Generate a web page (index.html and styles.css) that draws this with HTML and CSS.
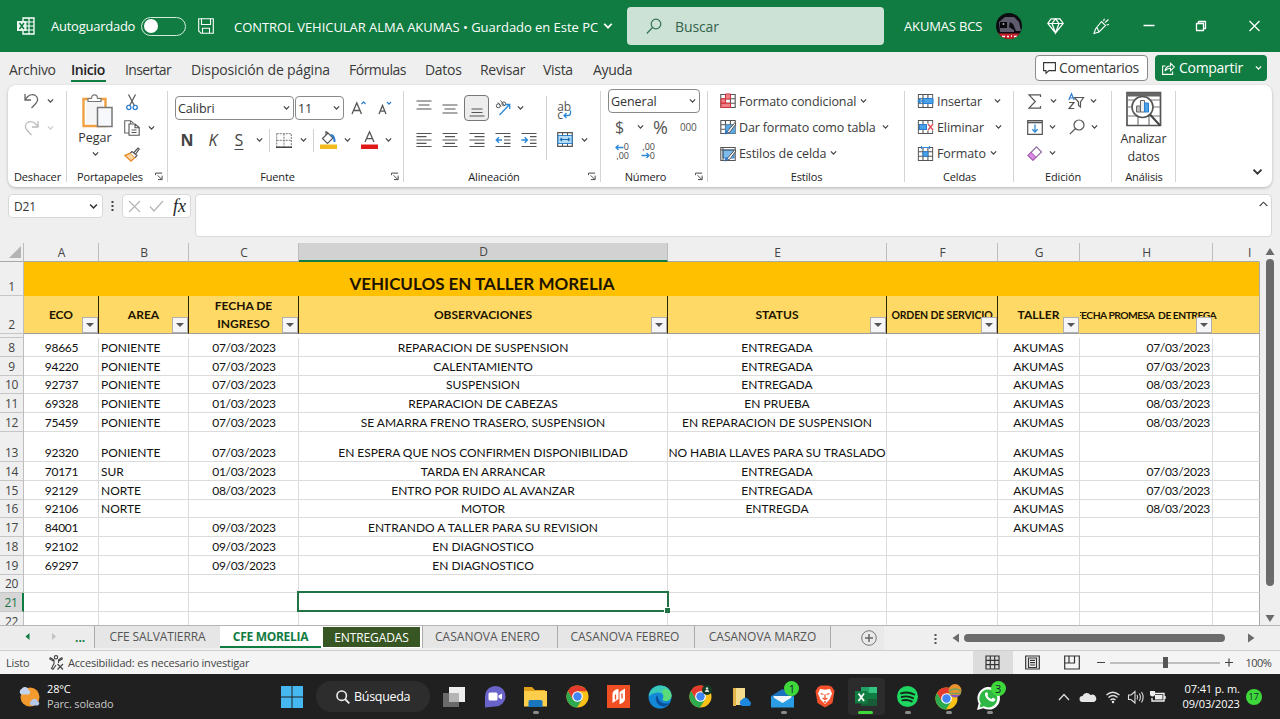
FILE: index.html
```html
<!DOCTYPE html>
<html lang="es">
<head>
<meta charset="utf-8">
<title>CONTROL VEHICULAR ALMA AKUMAS</title>
<link rel="stylesheet" href="styles.css">
</head>
<body>
<svg class="defs" width="0" height="0">
  <symbol id="chev" viewBox="0 0 8 6"><path d="M1 1.2 4 4.3 7 1.2" fill="none" stroke="currentColor" stroke-width="1.4"/></symbol>
  <symbol id="launch" viewBox="0 0 9 9"><path d="M.5 3V.7H8M3 3.2 7.5 7.7M8 3.5V8H3.3" fill="none" stroke="#444" stroke-width="1.1"/></symbol>
  <symbol id="gridcell" viewBox="0 0 16 16"><path d="M.8 1.5h14.4v13H.8zM.8 5.8h14.4M.8 10.2h14.4M5.5 1.5v13M10.4 1.5v13" fill="#fff" stroke="#555" stroke-width="1.1"/></symbol>
  <symbol id="chrome" viewBox="0 0 24 24"><circle cx="12" cy="12" r="11.5" fill="#fbc116"/><path d="M2 6.300A11.500 11.500 0 0 1 22 6.500H12L7 15Z" fill="#e33b2e"/><path d="M2 6.300A11.500 11.500 0 0 0 11.500 23.500L17 14.800 7.200 15Z" fill="#2da94f"/><circle cx="12" cy="12" r="5.600" fill="#fff"/><circle cx="12" cy="12" r="4.400" fill="#4285f4"/></symbol>
</svg>

<header class="titlebar">
  <svg class="xl" width="18" height="18" viewBox="0 0 18 18"><path d="M6 1h11v16H6z" fill="none" stroke="#fff" stroke-width="1.3"/><path d="M6 5h11M6 9h11M6 13h11M12 1v16" stroke="#fff" stroke-width="1.2"/><path d="M0 4h9.500v10H0z" fill="#e9f5ee"/><path d="M2.500 6 7 12M7 6l-4.500 6" stroke="#107c41" stroke-width="1.5"/></svg>
  <span class="autosave">Autoguardado</span>
  <span class="toggle"><i></i></span>
  <svg class="save" width="16" height="16" viewBox="0 0 16 16"><path d="M.7.7h14.600v14.600H3L.7 13zM3.500.7v5.800h9V.7M4.500 15.300v-5h7v5" fill="none" stroke="#fff" stroke-width="1.1"/></svg>
  <span class="doc">CONTROL VEHICULAR ALMA AKUMAS • Guardado en Este PC</span>
  <svg class="docchev" width="10" height="8" viewBox="0 0 8 6"><use href="#chev"/></svg>
  <div class="search"><svg width="16" height="17" viewBox="0 0 16 17"><circle cx="10" cy="6" r="4.800" fill="none" stroke="#33734f" stroke-width="1.200"/><path d="M6.500 9.500.8 15.500" stroke="#33734f" stroke-width="1.200"/></svg><span>Buscar</span></div>
  <span class="user">AKUMAS BCS</span>
  <svg class="avatar" width="26" height="26" viewBox="0 0 26 26"><clipPath id="av"><circle cx="13" cy="13" r="13"/></clipPath><g clip-path="url(#av)"><path fill="#0d0c12" d="M0 0h26v26H0z"/><path d="M3 9 9 4l9 0 5 5 2 9h-5l-3-7-3-2-1 5 5 3v2H4z" fill="#5d5b6c"/><path d="M4 9h7v6H4z" fill="#08080c"/><circle cx="7.500" cy="11" r="1" fill="#aaa"/><path fill="#c5202d" d="M0 20.500h26V26H0z"/><path d="M6 23.500h3m2 0h2m2-.5h1m2 .5h3" stroke="#fff" stroke-width="1.600"/></g></svg>
  <svg class="gem" width="17" height="16" viewBox="0 0 17 16"><path d="M4 .8h9L16.200 5.500 8.500 15 .8 5.500zM.8 5.500h15.400M8.500 15 5 5.500 8.500.8 12 5.500z" fill="none" stroke="#fff" stroke-width="1.200"/></svg>
  <svg class="pen" width="17" height="17" viewBox="0 0 17 17"><path d="M1 15.500 2.500 11 8.500 3.500l4 4L6 14zM4 9.500l2 4.500M1 15.500 6 14M10.500 3 11.500.8M12 4.500 15.500 1.500M13.500 7l2.500-.5" fill="none" stroke="#fff" stroke-width="1.100"/></svg>
  <svg class="winctl" width="118" height="14" viewBox="0 0 118 14"><path d="M.5 6.500h11M106.500 2l10 10M116.500 2l-10 10" stroke="#fff" stroke-width="1.300"/><path d="M53.500 4.500h7v7h-7zM55.500 4.500V2.500h7v7h-2" fill="none" stroke="#fff" stroke-width="1.300" stroke-linejoin="round"/></svg>
</header>

<nav class="tabs">
  <span class="t1">Archivo</span><span class="t2 on">Inicio</span><span class="t3">Insertar</span><span class="t4">Disposición de página</span><span class="t5">Fórmulas</span><span class="t6">Datos</span><span class="t7">Revisar</span><span class="t8">Vista</span><span class="t9">Ayuda</span>
  <div class="tabbtns">
    <span class="btn comments"><svg width="13" height="12" viewBox="0 0 13 12"><path d="M.6.600h11.800v8H6L3 11.200V8.600H.6z" fill="none" stroke="#333" stroke-width="1.100"/></svg>Comentarios</span>
    <span class="btn share"><svg width="13" height="13" viewBox="0 0 13 13"><path d="M3.500 4H.6v8.400h10V9.500M3 9c.5-3.500 2.500-5 5.500-5V1.200L12.400 5 8.500 8.800V6.200C6 6 4.500 7 3 9z" fill="none" stroke="#fff" stroke-width="1.100"/></svg>Compartir<svg class="sc" width="7" height="6"><use href="#chev"/></svg></span>
  </div>
</nav>

<section class="ribbon">
  <div class="grp g-undo">
    <div class="body">
      <div class="line h30 pl16"><svg width="15" height="16" viewBox="0 0 15 16"><path d="M1 1v6h6M1.300 6.500C4 2 8 .8 11 2.200c3 1.600 3.500 5.300 1 8L7.500 15" fill="none" stroke="#666" stroke-width="1.300"/></svg><svg class="cv ml8"><use href="#chev"/></svg></div>
      <div class="line h24 pl16 dim"><svg width="15" height="16" viewBox="0 0 15 16"><path d="M14 1v6H8M13.700 6.500C11 2 7 .8 4 2.200 1 3.800.5 7.500 3 10.200L7.500 15" fill="none" stroke="#bbb" stroke-width="1.300"/></svg><svg class="cv ml8"><use href="#chev"/></svg></div>
    </div>
    <div class="label">Deshacer</div>
  </div>

  <div class="grp g-clip">
    <div class="body cols">
      <div class="paste">
        <svg width="32" height="34" viewBox="0 0 32 34"><path d="M1.500 5h22v27h-22z" fill="#fff" stroke="#f0a040" stroke-width="2.400"/><path d="M4 7.500h17v22H4z" fill="#f5f5f5"/><path d="M6 7.500V4.500h3.500C9.500 2 11 .8 12.500.8S15.500 2 15.500 4.500H19v3z" fill="#fff" stroke="#777" stroke-width="1.200"/><path d="M15.500 13.500h14.500v19H15.500z" fill="#f7f8fb" stroke="#777" stroke-width="1.500"/></svg>
        <span>Pegar</span>
        <svg class="cv"><use href="#chev"/></svg>
      </div>
      <div class="stack">
        <div class="line h26"><svg class="ml2" width="12" height="17" viewBox="0 0 12 17"><path d="M2.500.5 8.300 11.500M9.500.5 3.700 11.500" stroke="#555" stroke-width="1.200"/><circle cx="2.800" cy="13.500" r="2.100" fill="none" stroke="#2b7cd3" stroke-width="1.300"/><circle cx="9.200" cy="13.500" r="2.100" fill="none" stroke="#2b7cd3" stroke-width="1.300"/></svg></div>
        <div class="line h26"><svg width="16" height="16" viewBox="0 0 16 16"><path d="M5 13H.7V.7h5.800l3 2.500M6.500.7v3" fill="none" stroke="#666" stroke-width="1.100"/><path d="M5 4h6l4.200 3.500v7.800H5zM11 4v3.800h4M7.500 10h5M7.500 12.500h5" fill="#fff" stroke="#555" stroke-width="1.100"/></svg><svg class="cv ml8"><use href="#chev"/></svg></div>
        <div class="line h26"><svg width="16" height="15" viewBox="0 0 16 15"><path d="M1 8.500 6.500 6l4.500 4.500-4 3.500z" fill="#fcd9a8" stroke="#ea8f2c" stroke-width="1.400"/><path d="M6.500 6 8 4.500l5 4L11 10.500M10 5.500l4-4.500 1.200 1-3.500 5" fill="#fff" stroke="#555" stroke-width="1.200"/></svg></div>
      </div>
    </div>
    <div class="label">Portapapeles</div><svg class="ln"><use href="#launch"/></svg>
  </div>

  <div class="grp g-font">
    <div class="body">
      <div class="line fr1">
        <span class="sel w118">Calibri<svg class="cv"><use href="#chev"/></svg></span>
        <span class="sel w49">11<svg class="cv"><use href="#chev"/></svg></span>
        <svg class="ml7" width="15" height="16" viewBox="0 0 15 16"><path d="M1 14 5.800 3 10.500 14M2.600 10.500H9" fill="none" stroke="#555" stroke-width="1.300"/><path d="M10.500 4 12.500 1.800 14.500 4" fill="none" stroke="#2b7cd3" stroke-width="1.200"/></svg>
        <svg class="ml11" width="15" height="16" viewBox="0 0 15 16"><path d="M2 14 5.500 5.500 9 14M3.300 11.200H8" fill="none" stroke="#555" stroke-width="1.300"/><path d="M10 2 12 4.200 14 2" fill="none" stroke="#2b7cd3" stroke-width="1.200"/></svg>
      </div>
      <div class="line fr2">
        <b class="gly n">N</b><i class="gly k">K</i><span class="gly s">S</span>
        <svg class="cv ml11"><use href="#chev"/></svg><i class="vs ml6"></i>
        <svg class="ml6" width="16" height="15" viewBox="0 0 16 15"><path d="M.7.700h14.600V14H.7zM8 .7V14M.7 7.300h14.600" fill="none" stroke="#777" stroke-width="1" stroke-dasharray="2 1"/><path d="M0 14.300h16" stroke="#444" stroke-width="1.400"/></svg>
        <svg class="cv ml8"><use href="#chev"/></svg><i class="vs ml6"></i>
        <svg class="ml6" width="17" height="18" viewBox="0 0 17 18"><path d="M2.500 7.500 8 2l5 5-5.500 5.500zM6 4V.8l2 1" fill="#fff" stroke="#555" stroke-width="1.200"/><path d="M10.500 4c3 0 4 2 4 7" fill="none" stroke="#2b7cd3" stroke-width="2"/><path fill="#f2bd1c" d="M0 13.500h17v4.500H0z"/></svg>
        <svg class="cv ml7"><use href="#chev"/></svg>
        <svg class="ml10" width="17" height="18" viewBox="0 0 17 18"><path d="M4 11 8.500.8 13 11M5.500 7.700h6" fill="none" stroke="#555" stroke-width="1.300"/><path fill="#e01919" d="M0 13.500h17v4.500H0z"/></svg>
        <svg class="cv ml7"><use href="#chev"/></svg>
      </div>
    </div>
    <div class="label">Fuente</div><svg class="ln"><use href="#launch"/></svg>
  </div>

  <div class="grp g-align">
    <div class="body cols">
      <div class="al">
        <div class="line ar1">
          <svg width="16" height="18" viewBox="0 0 16 18"><path d="M.5 2h15M2.500 6h11M.5 10h15" stroke="#555" stroke-width="1.200"/></svg>
          <svg width="16" height="18" viewBox="0 0 16 18"><path d="M.5 6h15M2.500 10h11M.5 14h15" stroke="#555" stroke-width="1.200"/></svg>
          <span class="pressed"><svg width="16" height="18" viewBox="0 0 16 18"><path d="M2.500 10h11M2.500 13.500h11M.5 17h15" stroke="#555" stroke-width="1.200"/></svg></span>
          <svg width="16" height="16" viewBox="0 0 16 16"><circle cx="3.300" cy="5.800" r="2" fill="none" stroke="#555"/><path d="M3 2.500 6 6.500M5.500.5 9.500 5.500" stroke="#555"/><circle cx="8.800" cy="3.800" r="1.900" fill="none" stroke="#555"/><path d="M4.500 15 14.500 4.500M10 4.500h4.700V9" fill="none" stroke="#2b88d8" stroke-width="1.300"/></svg>
          <svg class="cv"><use href="#chev"/></svg>
        </div>
        <div class="line ar2">
          <svg width="16" height="16" viewBox="0 0 16 16"><path d="M.5 1.500h15M.5 4.700h10M.5 8h15M.5 11.300h10M.5 14.500h15" stroke="#555" stroke-width="1.200"/></svg>
          <svg width="16" height="16" viewBox="0 0 16 16"><path d="M.5 1.500h15M3 4.700h10M.5 8h15M3 11.300h10M.5 14.500h15" stroke="#555" stroke-width="1.200"/></svg>
          <svg width="16" height="16" viewBox="0 0 16 16"><path d="M.5 1.500h15M5.500 4.700h10M.5 8h15M5.500 11.300h10M.5 14.500h15" stroke="#555" stroke-width="1.200"/></svg>
          <svg width="16" height="16" viewBox="0 0 16 16"><path d="M.5 1.500h15M9 4.700h6.500M9 8h6.500M9 11.300h6.500M.5 14.500h15" stroke="#555" stroke-width="1.200"/><path d="M7 8H1.500M4 5.300 1.300 8 4 10.700" fill="none" stroke="#2b88d8" stroke-width="1.400"/></svg>
          <svg width="16" height="16" viewBox="0 0 16 16"><path d="M.5 1.500h15M9 4.700h6.500M9 8h6.500M9 11.300h6.500M.5 14.500h15" stroke="#555" stroke-width="1.200"/><path d="M.5 8H6M3.700 5.300 6.400 8 3.700 10.700" fill="none" stroke="#2b88d8" stroke-width="1.400"/></svg>
        </div>
      </div>
      <i class="vs tall"></i>
      <div class="al2">
        <div class="line wrap"><span>ab<br>c</span><svg width="9" height="9" viewBox="0 0 9 9"><path d="M7.500.5v2.500c0 1.500-1 2.500-2.500 2.500H1M3.500 3 1 5.500 3.500 8" fill="none" stroke="#2b88d8" stroke-width="1.300"/></svg></div>
        <div class="line"><svg width="16" height="15" viewBox="0 0 16 15"><path d="M.7.700h14.600v13.600H.7z" fill="#fff" stroke="#555" stroke-width="1.200"/><path d="M1 3.500h14v8H1z" fill="#b8dcf5" stroke="#2b88d8"/><path d="M5.500.7v3M10.500.7v3M5.500 11.500v3M10.500 11.500v3" stroke="#555"/><path d="M3.500 7.500h9M5 5.800 3.300 7.500 5 9.200M11 5.800l1.700 1.700L11 9.200" fill="none" stroke="#1b6fb5" stroke-width="1.100"/></svg><svg class="cv ml8"><use href="#chev"/></svg></div>
      </div>
    </div>
    <div class="label">Alineación</div><svg class="ln"><use href="#launch"/></svg>
  </div>

  <div class="grp g-num">
    <div class="body">
      <span class="sel w92">General<svg class="cv"><use href="#chev"/></svg></span>
      <div class="line nr1"><span class="dol">$</span><svg class="cv"><use href="#chev"/></svg><span class="pct">%</span><span class="ooo">000</span></div>
      <div class="line nr2">
        <span class="dec"><span><svg width="9" height="7" viewBox="0 0 9 7"><path d="M8.500 3.500H1M3.500 1 1 3.500 3.500 6" fill="none" stroke="#2b88d8" stroke-width="1.300"/></svg>0</span><span>,00</span></span>
        <span class="dec"><span>,00</span><span><svg width="9" height="7" viewBox="0 0 9 7"><path d="M.5 3.500H8M5.500 1 8 3.500 5.500 6" fill="none" stroke="#2b88d8" stroke-width="1.300"/></svg>0</span></span>
      </div>
    </div>
    <div class="label">Número</div><svg class="ln"><use href="#launch"/></svg>
  </div>

  <div class="grp g-style">
    <div class="body cmds">
      <div class="line"><svg width="16" height="16" viewBox="0 0 16 16"><use href="#gridcell"/><path d="M5.500 1h5v5h-5zM1 5.800h4.500v4.400H1zM1 10.200h9.500v4.300H1z" fill="#f08088" stroke="#d13438"/></svg><span class="c1">Formato condicional</span><svg class="cv"><use href="#chev"/></svg></div>
      <div class="line"><svg width="16" height="16" viewBox="0 0 16 16"><use href="#gridcell"/><path d="M5.500 5.800h9.700v8.700H5.500z" fill="#5aa9e6"/><path d="M15 3.500 8.500 11l-3 4 4.500-2L15.800 5z" fill="#fff" stroke="#555"/><path d="m4 15.300 2-4 2.500 2z" fill="#2b7cd3"/></svg><span class="c2">Dar formato como tabla</span><svg class="cv"><use href="#chev"/></svg></div>
      <div class="line"><svg width="16" height="16" viewBox="0 0 16 16"><path d="M.8 1.500h14.400v13H.8z" fill="#fff" stroke="#555" stroke-width="1.100"/><path d="M3 4h11v8H3z" fill="#7dbbea" stroke="#2b7cd3"/><path d="M.8 4h14M3 1.500v13" stroke="#555"/><path d="M15 3.500 8.500 11l-3 4 4.500-2L15.800 5z" fill="#fff" stroke="#555"/><path d="m4 15.300 2-4 2.500 2z" fill="#2b7cd3"/></svg><span class="c3">Estilos de celda</span><svg class="cv"><use href="#chev"/></svg></div>
    </div>
    <div class="label">Estilos</div>
  </div>

  <div class="grp g-cells">
    <div class="body cmds">
      <div class="line"><svg width="17" height="16" viewBox="0 0 16 16"><use href="#gridcell"/><path d="M5.500 5.500h10v5h-10z" fill="#4aa3e6" stroke="#2b7cd3"/><path d="M7 8H1M3.500 5.300.8 8l2.700 2.700" fill="none" stroke="#2b88d8" stroke-width="1.300"/></svg><span class="c4">Insertar</span><svg class="cv"><use href="#chev"/></svg></div>
      <div class="line"><svg width="17" height="16" viewBox="0 0 16 16"><use href="#gridcell"/><path d="M2 5.500h7v5H2z" fill="#4aa3e6" stroke="#2b7cd3"/><path d="M9.500 4.500h6.500v7H9.500z" fill="#fff"/><path d="m10.500 5 5 6M15.500 5l-5 6" stroke="#e0484e" stroke-width="1.200"/></svg><span class="c5">Eliminar</span><svg class="cv"><use href="#chev"/></svg></div>
      <div class="line"><svg width="17" height="16" viewBox="0 0 16 16"><use href="#gridcell"/><path d="M5.500 5.800h5v4.400h-5z" fill="#4aa3e6" stroke="#2b7cd3"/><path d="M4 0v3M12 0v3M4 1.500h8" stroke="#2b88d8"/></svg><span class="c6">Formato</span><svg class="cv"><use href="#chev"/></svg></div>
    </div>
    <div class="label">Celdas</div>
  </div>

  <div class="grp g-edit">
    <div class="body cmds">
      <div class="line"><svg class="ml1" width="14" height="15" viewBox="0 0 14 15"><path d="M12.500 3V.8H1L7.300 7.500 1 14.200h11.500V12" fill="none" stroke="#555" stroke-width="1.200"/></svg><svg class="cv ml8"><use href="#chev"/></svg>
        <svg class="ml11" width="16" height="17" viewBox="0 0 16 17"><path d="M.8 7 3.500.8 6.200 7M1.700 5h3.600" fill="none" stroke="#2b7cd3" stroke-width="1.200"/><path d="M1 9.500h5L1 15.500h5.200" fill="none" stroke="#555" stroke-width="1.200"/><path d="M6.500 4.500h9l-3 4.500v5l-2-1.500V9z" fill="#fff" stroke="#555" stroke-width="1.200"/></svg><svg class="cv ml6"><use href="#chev"/></svg></div>
      <div class="line"><svg width="16" height="15" viewBox="0 0 16 15"><path d="M.7.700h14.600v13.600H.7z" fill="#fff" stroke="#555" stroke-width="1.200"/><path d="M1 2.500h14" stroke="#555" stroke-width="1.600"/><path d="M8 4.500v7.500M5.300 9.300 8 12l2.700-2.700" fill="none" stroke="#2b88d8" stroke-width="1.300"/></svg><svg class="cv ml6"><use href="#chev"/></svg>
        <svg class="ml13" width="16" height="16" viewBox="0 0 16 16"><circle cx="10" cy="6" r="5" fill="none" stroke="#555" stroke-width="1.200"/><path d="M6.500 9.500.8 15.200" stroke="#555" stroke-width="1.200"/></svg><svg class="cv ml6"><use href="#chev"/></svg></div>
      <div class="line"><svg width="16" height="15" viewBox="0 0 16 15"><path d="M1 9.500 9.500.8 14.500 6 6 14.300z" fill="#fff" stroke="#8a6a9a" stroke-width="1.100"/><path d="M1 9.500 4 6.300l5 5-3 3z" fill="#d98be0" stroke="#a94db5"/></svg><svg class="cv ml6"><use href="#chev"/></svg></div>
    </div>
    <div class="label">Edición</div>
  </div>

  <div class="grp g-an">
    <div class="body an">
      <svg width="36" height="36" viewBox="0 0 36 36"><path d="M1 1.500h33.500v33H1z" fill="#fff" stroke="#555" stroke-width="1.700"/><path d="M1 3.500h33.500" stroke="#666" stroke-width="4"/><path d="M1 9h33M1 16h33M1 25h33M12 25v9M23 25v9" stroke="#777" stroke-width="1.200"/><circle cx="16.500" cy="16" r="10.500" fill="#fff" stroke="#555" stroke-width="1.600"/><path d="m24 23.500 10 11" stroke="#444" stroke-width="2"/><path d="M10.500 15h4v6h-4z" fill="#bbb" stroke="#666"/><path d="M14.500 9.500h4V21h-4z" fill="#eee" stroke="#666"/><path d="M18.500 12h4v9h-4z" fill="#4aa3e6" stroke="#2b7cd3"/></svg>
      <span>Analizar<br>datos</span>
    </div>
    <div class="label">Análisis</div>
  </div>
  <svg class="collapse" width="11" height="8" viewBox="0 0 8 6"><use href="#chev"/></svg>
</section>

<section class="fbar">
  <div class="name">D21<svg width="9" height="7" viewBox="0 0 8 6"><use href="#chev"/></svg></div>
  <svg class="dots" width="3" height="12" viewBox="0 0 3 12"><path d="M.5 1h2v2h-2zM.5 5h2v2h-2zM.5 9h2v2h-2z" fill="#444"/></svg>
  <div class="fx"><svg width="13" height="13" viewBox="0 0 13 13"><path d="m1 1 11 11M12 1 1 12" stroke="#b5b5b5" stroke-width="1.200"/></svg><svg width="15" height="12" viewBox="0 0 15 12"><path d="m1 6.500 4 4.500L14 1" fill="none" stroke="#b5b5b5" stroke-width="1.200"/></svg><i>fx</i></div>
  <div class="formula"><svg width="9" height="6" viewBox="0 0 9 6"><path d="M.7 5 4.500 1.200 8.300 5" fill="none" stroke="#444" stroke-width="1.100"/></svg></div>
</section>

<main class="sheet">
<table>
<colgroup><col class="k0"><col class="ka"><col class="kb"><col class="kc"><col class="kd"><col class="ke"><col class="kf"><col class="kg"><col class="kh"><col class="ki"></colgroup>
<tr class="cols-h"><th><svg class="corner" width="12" height="12"><path d="M12 0v12H0z" fill="#b4b4b4"/></svg></th><th>A</th><th>B</th><th>C</th><th class="act">D</th><th>E</th><th>F</th><th>G</th><th>H</th><th class="ri">I</th></tr>
<tr class="title"><th>1</th><td></td><td></td><td></td><td>VEHICULOS EN TALLER MORELIA</td><td></td><td></td><td></td><td></td><td></td></tr>
<tr class="heads"><th>2</th><td class="bk">ECO<i class="f"></i></td><td class="bk">AREA<i class="f"></i></td><td class="bk two">FECHA DE<br>INGRESO<i class="f"></i></td><td class="bk">OBSERVACIONES<i class="f"></i></td><td class="bk">STATUS<i class="f"></i></td><td class="bk sm"><span>ORDEN DE SERVICIO</span><i class="f"></i></td><td>TALLER<i class="f"></i></td><td class="sm promesa"><span>FECHA PROMESA&nbsp; DE ENTREGA</span><i class="f"></i></td><td></td></tr>
<tr class="gap"><th></th><td colspan="9"></td></tr>
<tr class="a"><th>8</th><td>98665</td><td>PONIENTE</td><td>07/03/2023</td><td>REPARACION DE SUSPENSION</td><td>ENTREGADA</td><td></td><td>AKUMAS</td><td>07/03/2023</td><td></td></tr>
<tr class="a"><th>9</th><td>94220</td><td>PONIENTE</td><td>07/03/2023</td><td>CALENTAMIENTO</td><td>ENTREGADA</td><td></td><td>AKUMAS</td><td>07/03/2023</td><td></td></tr>
<tr class="b"><th>10</th><td>92737</td><td>PONIENTE</td><td>07/03/2023</td><td>SUSPENSION</td><td>ENTREGADA</td><td></td><td>AKUMAS</td><td>08/03/2023</td><td></td></tr>
<tr class="a"><th>11</th><td>69328</td><td>PONIENTE</td><td>01/03/2023</td><td>REPARACION DE CABEZAS</td><td>EN PRUEBA</td><td></td><td>AKUMAS</td><td>08/03/2023</td><td></td></tr>
<tr class="a"><th>12</th><td>75459</td><td>PONIENTE</td><td>07/03/2023</td><td>SE AMARRA FRENO TRASERO, SUSPENSION</td><td>EN REPARACION DE SUSPENSION</td><td></td><td>AKUMAS</td><td>08/03/2023</td><td></td></tr>
<tr class="c"><th>13</th><td>92320</td><td>PONIENTE</td><td>07/03/2023</td><td>EN ESPERA QUE NOS CONFIRMEN DISPONIBILIDAD</td><td>NO HABIA LLAVES PARA SU TRASLADO</td><td></td><td>AKUMAS</td><td></td><td></td></tr>
<tr class="a"><th>14</th><td>70171</td><td>SUR</td><td>01/03/2023</td><td>TARDA EN ARRANCAR</td><td>ENTREGADA</td><td></td><td>AKUMAS</td><td>07/03/2023</td><td></td></tr>
<tr class="a"><th>15</th><td>92129</td><td>NORTE</td><td>08/03/2023</td><td>ENTRO POR RUIDO AL AVANZAR</td><td>ENTREGADA</td><td></td><td>AKUMAS</td><td>07/03/2023</td><td></td></tr>
<tr class="b"><th>16</th><td>92106</td><td>NORTE</td><td></td><td>MOTOR</td><td>ENTREGDA</td><td></td><td>AKUMAS</td><td>08/03/2023</td><td></td></tr>
<tr class="a"><th>17</th><td>84001</td><td></td><td>09/03/2023</td><td>ENTRANDO A TALLER PARA SU REVISION</td><td></td><td></td><td>AKUMAS</td><td></td><td></td></tr>
<tr class="a"><th>18</th><td>92102</td><td></td><td>09/03/2023</td><td>EN DIAGNOSTICO</td><td></td><td></td><td></td><td></td><td></td></tr>
<tr class="a"><th>19</th><td>69297</td><td></td><td>09/03/2023</td><td>EN DIAGNOSTICO</td><td></td><td></td><td></td><td></td><td></td></tr>
<tr class="b"><th>20</th><td></td><td></td><td></td><td></td><td></td><td></td><td></td><td></td><td></td></tr>
<tr class="a"><th class="actr">21</th><td></td><td></td><td></td><td class="cur"><i></i></td><td></td><td></td><td></td><td></td><td></td></tr>
<tr class="a"><th>22</th><td></td><td></td><td></td><td></td><td></td><td></td><td></td><td></td><td></td></tr>
</table>
<div class="vscroll"><svg width="10" height="8"><path d="M5 0 9.500 7H.5z" fill="#6b6b6b"/></svg><i></i><svg class="dn" width="10" height="8"><path d="M5 7 9.500 0H.5z" fill="#6b6b6b"/></svg></div>
</main>

<section class="sheets">
  <div class="navs"><svg width="60" height="10" viewBox="0 0 60 10"><path d="M5.500 1v7L1.500 4.500z" fill="#107c41"/><path d="M28 1v7l4-3.500z" fill="#c4c4c4"/></svg><b>...</b></div>
  <span class="st s1">CFE SALVATIERRA</span><span class="st s2">CFE MORELIA</span><span class="st s3">ENTREGADAS</span><span class="st s4">CASANOVA ENERO</span><span class="st s5">CASANOVA FEBREO</span><span class="st s6">CASANOVA MARZO</span>
  <span class="plus"><svg width="16" height="16" viewBox="0 0 16 16"><circle cx="8" cy="8" r="7.300" fill="none" stroke="#777"/><path d="M8 4v8M4 8h8" stroke="#666" stroke-width="1.500"/></svg></span>
  <svg class="hd" width="3" height="12" viewBox="0 0 3 12"><path d="M.5 1h2v2h-2zM.5 5h2v2h-2zM.5 9h2v2h-2z" fill="#555"/></svg>
  <div class="hscroll"><svg width="8" height="10"><path d="M7 .5v9L.5 5z" fill="#6b6b6b"/></svg><i></i><svg width="8" height="10"><path d="M1 .5v9L7.500 5z" fill="#6b6b6b"/></svg></div>
</section>

<section class="status">
  <span class="listo">Listo</span>
  <svg class="acc" width="15" height="15" viewBox="0 0 15 15"><circle cx="7" cy="2.300" r="1.700" fill="none" stroke="#444" stroke-width="1.100"/><path d="M1 2.500 5 5v3.500l-2.500 5 1.500.8L7 10M13 2.500 9.500 5v3M1 2.500 .8 4 4.500 6M13 2.500l.3 1.500L9.500 6.200" fill="none" stroke="#444" stroke-width="1.100"/><path d="m8.500 9 5.500 5.500M14 9l-5.500 5.500" stroke="#444" stroke-width="1.200"/></svg>
  <span class="acct">Accesibilidad: es necesario investigar</span>
  <div class="views">
    <span class="von"><svg width="15" height="15" viewBox="0 0 15 15"><path d="M1 1h13v13H1zM5.300 1v13M9.700 1v13M1 5.300h13M1 9.700h13" fill="none" stroke="#333" stroke-width="1.200"/></svg></span>
    <span><svg width="15" height="15" viewBox="0 0 15 15"><path d="M.7 1h13.600v13H.7zM3.500 3h8v9.500h-8zM5 5.300h5M5 7.700h5M5 10h5" fill="none" stroke="#333" stroke-width="1.200"/></svg></span>
    <span><svg width="16" height="15" viewBox="0 0 16 15"><path d="M.7 1h14.600v13H.7zM5 1v7h5.500V1M.7 8H5" fill="none" stroke="#333" stroke-width="1.200"/></svg></span>
  </div>
  <svg class="zoom" width="138" height="13" viewBox="0 0 138 13"><path d="M1 6.500h8M129 6.500h8M133 2.500v8" stroke="#444" stroke-width="1.200"/><path d="M14 7h110" stroke="#888"/><path d="M67 1h5v11h-5z" fill="#555"/></svg>
  <span class="pc">100%</span>
</section>

<footer class="taskbar">
  <svg class="sun" width="23" height="23" viewBox="0 0 23 23"><circle cx="12" cy="12" r="9.500" fill="#f29a2e"/><path d="M3.500 9.500a3 3 0 0 1 0-5.500 3.800 3.800 0 0 1 7 .8 2.500 2.500 0 0 1 0 4.700z" fill="#c3d3ee"/><path d="M13.500 20.500a2.700 2.700 0 0 1 0-5 3.500 3.500 0 0 1 6.300.7 2.300 2.300 0 0 1 0 4.300z" fill="#b5c9ec"/></svg>
  <div class="weather"><span>28°C</span><span class="g">Parc. soleado</span></div>
  <svg class="win" width="22" height="22" viewBox="0 0 22 22"><path d="M0 0h10.500v10.500H0zM11.500 0H22v10.500H11.500zM0 11.500h10.500V22H0zM11.500 11.500H22V22H11.500z" fill="#45b8f2"/></svg>
  <div class="tsearch"><svg width="14" height="14" viewBox="0 0 14 14"><circle cx="5.700" cy="5.700" r="4.700" fill="none" stroke="#eee" stroke-width="1.600"/><path d="m9 9 4.300 4.300" stroke="#eee" stroke-width="1.800"/></svg>Búsqueda</div>
  <div class="apps">
    <span><svg width="24" height="22" viewBox="0 0 24 22"><path fill="#eee" d="M7 1h16v15H7z"/><path fill="#6a6a6a" d="M1 7h16v14H1z"/><path fill="#b5b5b5" d="M7 7h10v9H7z"/></svg></span>
    <span><svg width="22" height="23" viewBox="0 0 22 23"><path d="M1 22.500V11a10.300 10.300 0 1 1 10 10.500z" fill="#6a63c9"/><rect x="4.500" y="7.500" width="9" height="8" rx="1.500" fill="#fff"/><path d="m14.500 10.500 3.500-2v6l-3.500-2z" fill="#fff"/></svg></span>
    <span class="dot"><svg width="24" height="22" viewBox="0 0 24 22"><path d="M0 1h8l3 3h10v6H0z" fill="#e0a017"/><path d="M0 5h23v15.500H0z" fill="#fcce4b"/><path d="M4.500 21v-5.500q0-1.500 1.500-1.500h11q1.500 0 1.500 1.500V21z" fill="#1976bd"/></svg></span>
    <span><svg width="23" height="23"><use href="#chrome"/></svg></span>
    <span><svg width="23" height="23" viewBox="0 0 23 23"><path fill="#f04e23" d="M0 0h23v23H0z"/><path d="M5.500 9c0-3 4-5.500 6-4.500v9.500L5.500 18z" fill="#fff"/><path d="M12.500 7 18 3.500V14c0 2.500-3.500 5-5.500 5z" fill="#fff"/><path d="M8.500 9.500v5M15 8.500v5" stroke="#f04e23" stroke-width="1.300"/></svg></span>
    <span><svg width="24" height="24" viewBox="0 0 24 24"><circle cx="12" cy="12" r="11.500" fill="#1388d6"/><path d="M1 9.500C3 3 7.500.5 12.500.5c6.500 0 11 5 11 9.500 0 4-3 6-6 6-2 0-3.500-1-2.500-2.500 1.500-3-1-6-5-6-3 0-6.500 1-9 4z" fill="#38c9b8"/><path d="M16 3.500c4.500 1 7.500 4 7.500 7 0 3.500-3 5.500-6 5.500-2 0-3.500-1-2.500-2.500 2-4-1-6-1-6z" fill="#5bdc78"/><path d="M9.500 10C6 13 8 20.500 15 21.500c3 0 5-1.500 6.500-3.500-6 2-11.500-1-12-8z" fill="#0b4f99"/></svg></span>
    <span><svg width="25" height="23" viewBox="0 0 25 23"><use href="#chrome" width="23" height="23"/><circle cx="18" cy="5" r="5" fill="#123a22"/><path d="M15.800 7q0-2.200 2.200-2.200T20.200 7z" fill="#ddd"/><circle cx="18" cy="3.500" r="1.200" fill="#ddd"/></svg></span>
    <span><svg width="20" height="22" viewBox="0 0 20 22"><path d="M1 2h12v17H1z" fill="#f6dc8e"/><path d="M1 2h3v18H1z" fill="#e2b448"/><path d="M10 20a3.500 3.500 0 0 1 0-6.500 4 4 0 0 1 7.200 1.200A2.800 2.800 0 0 1 17 20z" fill="#1e88e0"/></svg></span>
    <span class="dot"><svg width="28" height="26" viewBox="0 0 28 26"><path d="m1 12 11.500-7L24 12v11H1z" fill="#1b73be"/><path d="M3.500 12h18v5l-9 5-9-5z" fill="#f3f6fa"/><path d="M1 12v11.500h23V12l-11.500 7z" fill="#2a9de4"/></svg><em>1</em></span>
    <span><svg width="20" height="23" viewBox="0 0 20 23"><path d="m3 2 3-1.500h8L17 2l2.500 4-2 12L10 22.500 2.500 18 .5 6z" fill="#f4512c"/><path d="m5 4 5 .8L15 4l2 4.500-2.500 6L10 19l-4.500-4.500L3 8.500z" fill="#fff"/><path d="m5.500 8.500 3 1M14.500 8.500l-3 1M10 9.500v4M7.500 13l2.500 1.500 2.500-1.500M9 17h2" fill="none" stroke="#f4512c" stroke-width="1.300"/></svg></span>
    <span class="open"><svg width="23" height="22" viewBox="0 0 23 22"><path d="M6 1h16v19H6z" fill="#21a366"/><path d="M6 6.500h16V13H6z" fill="#107c41"/><path d="M14 1h8v6h-8z" fill="#33c481"/><path d="M6 13h16v7H6z" fill="#185c37"/><path d="M0 5h12.500v12.500H0z" fill="#107c41"/><path d="m3.500 7.500 5.500 7.500M9 7.500 3.500 15" stroke="#fff" stroke-width="1.800"/></svg></span>
    <span class="dot"><svg width="21" height="21" viewBox="0 0 21 21"><circle cx="10.500" cy="10.500" r="10.500" fill="#1ed760"/><path d="M4 7.300q7-2 13.200 1.200M4.700 11q6-1.600 11.300 1.200M5.300 14.400q5-1.200 9.500 1" fill="none" stroke="#14251a" stroke-width="1.900" stroke-linecap="round"/></svg></span>
    <span class="dot"><svg width="27" height="26" viewBox="0 0 27 26"><use href="#chrome" y="3" width="23" height="23"/><circle cx="20" cy="6.500" r="6.500" fill="#e8912e"/><path d="M14 7q6-4 12 0M14 9.500h12" stroke="#6fa55e" stroke-width="1.500" fill="none"/><path d="M15 11h10q-5 5-10 0" fill="#8a56c4"/></svg></span>
    <span class="dot"><svg width="28" height="28" viewBox="0 0 28 28"><path d="m1 27 1.700-6.500A11.300 11.300 0 1 1 7.500 25.300z" fill="#fff"/><path d="m3.500 24.500 1.200-4.300A9 9 0 1 1 8 23.300z" fill="#2fb944"/><path d="M9 10.500c1-2 2.300-1.500 2.800 0 .7 1.500-.3 1.700-.3 2.200 1 1.800 2 2.600 3.800 3.300.7 0 1-1.300 1.700-1.200l2.500 1.300c.3 1-1 2.500-2.500 2.600-4 0-8.500-4.500-8-8.200z" fill="#fff"/></svg><em>3</em></span>
  </div>
  <svg class="tray" width="108" height="16" viewBox="0 0 108 16"><path d="M1 11 6 5.500 11 11" fill="none" stroke="#ddd" stroke-width="1.300"/><path d="M24.500 13a3 3 0 0 1 0-6 4.500 4.500 0 0 1 8-1 3.800 3.800 0 0 1 3.500 7z" fill="#e6e6e6"/><path d="M48.500 6q6-5.500 13 0M50.500 8.600q4.500-4 9 0M52.500 11q2.500-2.200 5 0" fill="none" stroke="#ddd" stroke-width="1.400"/><circle cx="55" cy="13" r="1.200" fill="#eee"/><path d="M70.500 6v4.500h2.500l4 3.500V2.500l-4 3.500zM79 6q1.300 2.200 0 4.500M81.300 4.500q2.300 3.700 0 7.500M83.500 3q3.300 5.200 0 10.500" fill="none" stroke="#ddd" stroke-width="1.100"/><path d="M95 4.500h11v7.500H94V9M107 7v3" fill="none" stroke="#eee" stroke-width="1.400"/><path d="M97 6h7.500v4.500H97zM92 2h5v4q-2.500 3-5 0z" fill="#eee"/></svg>
  <div class="clock"><span>07:41 p. m.</span><span>09/03/2023</span></div>
  <span class="notif">17</span>
</footer>
</body>
</html>
```
FILE: styles.css
```css
* { box-sizing: border-box; }
body { margin: 0; width: 1280px; height: 719px; overflow: hidden; background: #efefef; font-family: "Open Sans", "Noto Sans", sans-serif; font-size: 12px; color: #333; }
svg { display: block; flex: none; overflow: visible; }
.defs { position: absolute; }
span, b { white-space: nowrap; }

.titlebar { display: flex; align-items: center; height: 52px; background: #107c41; color: #fff; font-size: 13px; }
.xl { margin-left: 17px; }
.autosave { margin-left: 16px; width: 84px; letter-spacing: -.25px; }
.toggle { margin-left: 6px; width: 45px; height: 19px; border: 1.500px solid #d5eadd; border-radius: 10px; display: flex; align-items: center; padding-left: 2px; }
.toggle i { width: 14px; height: 14px; border-radius: 50%; background: #fff; }
.save { margin-left: 12px; }
.doc { margin-left: 20px; width: 365px; letter-spacing: -.04px; padding-top: 1px; }
.docchev { margin-left: 4px; }
.search { margin-left: 14px; width: 257px; height: 38px; background: #cde2d7; border-radius: 4px; display: flex; align-items: center; padding-left: 19px; gap: 13px; color: #33634a; font-size: 14px; letter-spacing: -.1px; }
.user { margin-left: 20px; width: 80px; letter-spacing: -.15px; }
.avatar { margin-left: 12px; }
.gem { margin-left: 25px; }
.pen { margin-left: 29px; }
.winctl { margin-left: 33px; }

.tabs { display: flex; height: 34px; align-items: flex-start; font-size: 14px; line-height: 20px; padding-top: 8px; color: #3a3a3a; letter-spacing: -.3px; }
.tabs > span { height: 22px; }
.t1 { margin-left: 9px; width: 48px; }
.t2 { margin-left: 14px; width: 35px; }
.t3 { margin-left: 19px; width: 47px; letter-spacing: -.65px; }
.t4 { margin-left: 19px; width: 140px; letter-spacing: -.16px; }
.t5 { margin-left: 18px; width: 58px; letter-spacing: -.5px; }
.t6 { margin-left: 18px; width: 38px; }
.t7 { margin-left: 17px; width: 46px; }
.t8 { margin-left: 17px; width: 32px; }
.t9 { margin-left: 18px; width: 42px; }
.on { font-weight: 600; border-bottom: 2px solid #107c41; letter-spacing: -.45px; color: #222; }
.tabbtns { margin-left: auto; margin-top: -5px; margin-right: 13px; display: flex; gap: 7px; }
.btn { display: flex; align-items: center; height: 26px; border-radius: 4px; font-size: 14px; }
.comments { width: 113px; background: #fff; border: 1px solid #8a8a8a; padding-left: 7px; gap: 3px; letter-spacing: -.35px; }
.share { width: 112px; background: #107c41; color: #fff; padding-left: 7px; gap: 4px; }
.sc { margin-left: 8px; }

.ribbon { display: flex; margin: -1px 8px 0; height: 102px; background: #fff; border-radius: 8px; box-shadow: 0 1px 3px rgba(0,0,0,.25); }
.grp { position: relative; height: 102px; padding-top: 1px; display: flex; flex-direction: column; }
.grp::after { content: ""; position: absolute; right: 0; top: 6px; height: 91px; width: 1px; background: #d4d4d4; }
.body { height: 82px; flex: none; }
.label { text-align: center; font-size: 11px; line-height: 17px; letter-spacing: -.15px; color: #222; }
.ln { position: absolute; right: 5px; bottom: 6px; width: 8px; height: 9px; }
.line { display: flex; align-items: center; }
.cols { display: flex; }
.cv { width: 7px; height: 6px; color: #444; }
.dim .cv { color: #ccc; }
.g-undo { width: 59px; } .g-clip { width: 101px; } .g-font { width: 236px; } .g-align { width: 197px; } .g-num { width: 107px; } .g-style { width: 197px; } .g-cells { width: 109px; } .g-edit { width: 98px; } .g-an { width: 64px; }
.g-clip .label { padding-right: 15px; } .g-font .label { padding-right: 17px; } .g-align .label { padding-right: 17px; } .g-num .label { padding-right: 18px; }
.ml1 { margin-left: 1px; } .ml2 { margin-left: 2px; } .ml6 { margin-left: 6px; } .ml7 { margin-left: 7px; } .ml8 { margin-left: 8px; } .ml10 { margin-left: 10px; } .ml11 { margin-left: 11px; } .ml13 { margin-left: 13px; }
.pl16 { padding-left: 16px; }
.h30 { height: 30px; } .h24 { height: 24px; } .h26 { height: 26px; }

.paste { margin-left: 11px; padding-top: 8px; width: 34px; display: flex; flex-direction: column; align-items: center; font-size: 12.500px; line-height: 19px; }
.paste > svg:first-child { margin-left: 5px; }
.paste .cv { margin-top: 4px; }
.stack { padding: 3px 0 0 12px; }

.g-font .body { padding: 10px 0 0 7px; }
.sel { display: flex; align-items: center; justify-content: space-between; height: 24px; border: 1px solid #8a8a8a; border-radius: 4px; background: #fff; padding: 0 3px 0 2px; font-size: 12.500px; letter-spacing: -.05px; }
.w118 { width: 119px; } .w49 { width: 49px; margin-left: 1px; } .w92 { width: 92px; }
.fr2 { margin-top: 8px; height: 24px; margin-left: -1px; }
.gly { font-size: 16px; color: #444; line-height: 24px; text-align: center; }
.n { width: 14px; margin-left: 6px; } .k { width: 12px; margin-left: 13px; } .s { width: 12px; margin-left: 14px; text-decoration: underline; text-underline-offset: 3px; text-decoration-thickness: 1px; }
.vs { width: 1px; height: 23px; background: #d0d0d0; }

.al { padding: 9px 0 0 12px; }
.ar1 { height: 26px; }
.ar1 > svg + svg { margin-left: 10px; }
.ar1 > .pressed + svg + .cv { margin-left: 6px; }
.pressed { margin: 0 6px; width: 25px; height: 26px; background: #ededed; border: 1px solid #777; border-radius: 4px; display: flex; align-items: center; justify-content: center; }
.ar2 { margin-top: 6px; gap: 10.300px; height: 25px; }
.vs.tall { margin: 10px 0 0 9px; height: 64px; }
.al2 { padding: 11px 0 0 10px; }
.wrap { height: 22px; line-height: 8px; font-size: 12px; color: #555; align-items: flex-end; }
.wrap svg { margin-left: -8px; }
.al2 .line + .line { margin-top: 13px; }

.g-num .body { padding: 3px 0 0 7px; }
.nr1 { height: 27px; color: #555; }
.dol { font-size: 16px; width: 10px; margin-left: 7px; }
.nr1 .cv { margin-left: 12px; }
.pct { font-size: 18px; margin-left: 9px; width: 18px; letter-spacing: -.5px; }
.ooo { font-size: 10px; margin-left: 9px; letter-spacing: -.2px; }
.nr2 { padding-left: 5px; gap: 10px; margin-top: 3px; }
.dec { display: flex; flex-direction: column; align-items: flex-end; width: 16px; font-size: 9px; line-height: 8.500px; color: #444; }
.dec > span { display: flex; align-items: center; }

.cmds { padding-top: 2px; }
.cmds .line { height: 26.300px; font-size: 12.500px; letter-spacing: -.1px; color: #3a3a3a; }
.cmds .cv { margin-top: -1px; }
.g-style .line { padding-left: 12px; }
.g-cells .line { padding-left: 12px; }
.g-edit .line { padding-left: 13px; }
.cmds .line > span { margin-left: 3px; }
.c1 { width: 121px; } .c2 { width: 143px; } .c3 { width: 91px; } .c4 { width: 57px; } .c5 { width: 58px; } .c6 { width: 53px; }
.c2 { letter-spacing: -.15px; }

.an { display: flex; flex-direction: column; align-items: center; padding-top: 5px; font-size: 12.500px; line-height: 18px; text-align: center; }
.an span { margin: 3px 1px 0 0; letter-spacing: -.1px; }
.collapse { margin: 83px 0 0 76px; color: #333; }

.fbar { display: flex; margin: 7px 8px 0; align-items: flex-start; height: 43px; }
.fbar > div { background: #fff; border: 1px solid #d9d9d9; border-radius: 4px; }
.name { width: 95px; height: 24px; display: flex; align-items: center; justify-content: space-between; padding: 0 4px 0 5px; font-size: 12px; letter-spacing: -.2px; }
.dots { margin: 6px 8px 0; }
.fx { width: 69px; height: 24px; display: flex; align-items: center; padding-left: 5px; gap: 8px; }
.fx i { font: italic 18px/20px "Liberation Serif", serif; color: #222; margin-left: 1px; }
.formula { margin-left: 4px; flex: 1; height: 43px; display: flex; justify-content: flex-end; padding: 6px 3px 0; }

.sheet { display: flex; height: 382px; margin-top: 6px; overflow: hidden; }
table { width: 1260px; flex: none; table-layout: fixed; border-spacing: 0; font-family: Lato, sans-serif; font-size: 12px; color: #111; align-self: flex-start; }
.k0 { width: 24px; } .ka { width: 75px; } .kb { width: 90px; } .kc { width: 110px; } .kd { width: 369px; } .ke { width: 219px; } .kf { width: 111px; } .kg { width: 82px; } .kh { width: 133px; } .ki { width: 47px; }
th, td { padding: 0; text-align: center; vertical-align: bottom; white-space: nowrap; position: relative; line-height: 17px; }
td { background: #fff; border-right: 1px solid #dcdcdc; border-bottom: 1px solid #dcdcdc; }
th { font-weight: 400; font-family: "Open Sans", sans-serif; background: #efefef; border-right: 1px solid #bdbdbd; border-bottom: 1px solid #c6c6c6; color: #444; font-size: 12px; letter-spacing: -.3px; }
.cols-h { height: 19px; }
.cols-h th { border-bottom-color: #a9a9a9; padding-left: 1px; }
.cols-h .act { background: #d2d2d2; border-bottom: 2px solid #107c41; line-height: 16px; }
.cols-h .ri { text-align: right; padding-right: 8px; border-right-color: #efefef; }
.corner { margin: 0 0 3px 8px; }
.title { height: 34px; }
.title td { background: #ffc000; border-color: #ffc000; font-size: 17px; font-weight: 700; line-height: 22px; padding-right: 2px; color: #1c1400; }
.title td:last-child, .heads td:last-child { border-right-color: #aaa; }
.heads { height: 38px; }
.heads td { background: #ffd966; border-right-color: #ffd966; border-bottom-color: #9c9c9c; font-weight: 700; vertical-align: middle; line-height: 18px; padding-top: 1px; color: #1c1400; }
.heads .bk { border-right-color: #2d2400; }
.heads .two { padding-top: 0; }
.heads .sm { font-size: 10.500px; letter-spacing: -.15px; }
.heads .promesa { clip-path: inset(0 -20px 0 0); z-index: 1; font-size: 10.300px; letter-spacing: -.5px; }
.promesa span { margin: 0 -9px; }
.f { position: absolute; right: 0; bottom: 0; width: 16px; height: 16px; background: #f6f6f9; border: 1px solid #b0b0b0; }
.f::after { content: ""; position: absolute; left: 3px; top: 5px; border: 4px solid transparent; border-top-color: #555; border-bottom: 0; }
.gap { height: 4px; }
.gap th, .gap td { line-height: 0; }
.gap td { border-bottom: 0; border-right-color: #aaa; }
.a { height: 19px; } .b { height: 18px; } .c { height: 30px; }
.a td:nth-child(2), .b td:nth-child(2), .c td:nth-child(2) { letter-spacing: -.25px; padding-left: 1px; }
.a td:nth-child(4), .b td:nth-child(4), .c td:nth-child(4) { letter-spacing: -.3px; padding-left: 1px; }
.a td:nth-child(3), .b td:nth-child(3), .c td:nth-child(3) { text-align: left; padding-left: 2px; }
.a td:nth-child(9), .b td:nth-child(9), .c td:nth-child(9) { text-align: right; padding-right: 2px; letter-spacing: -.3px; }
.c td:nth-child(5), .c td:nth-child(6) { letter-spacing: -.05px; }
.a td:last-child, .b td:last-child, .c td:last-child { border-right-color: #aaa; }
.actr { background: #d6d6d6; color: #217346; border-right: 2px solid #107c41; }
.cur i { position: absolute; z-index: 2; left: -2px; right: -2px; top: -2px; bottom: -1px; border: 2px solid #217346; }
.cur i::after { content: ""; position: absolute; right: -3px; bottom: -3px; width: 5px; height: 5px; background: #217346; border: 1px solid #fff; border-right: 0; border-bottom: 0; }
.vscroll { width: 20px; display: flex; flex-direction: column; align-items: center; padding-top: 5px; }
.vscroll i { margin-top: 3px; width: 8px; height: 327px; border-radius: 4px; background: #6b6b6b; }
.vscroll .dn { margin-top: 29px; }

.sheets { display: flex; height: 26px; border-top: 1px solid #b5b5b5; border-bottom: 1px solid #cfcfcf; font-size: 12px; color: #555; }
.navs { width: 95px; border-right: 1px solid #aaa; display: flex; align-items: center; padding-left: 24px; height: 22px; background: #ececec; }
.navs b { margin-left: -9px; color: #107c41; }
.st { height: 22px; line-height: 22px; text-align: center; background: #e6e6e6; letter-spacing: -.12px; }
.s1 { width: 125px; } .s2 { width: 101px; background: #fff; color: #107c41; font-weight: 700; border-bottom: 2px solid #107c41; letter-spacing: -.3px; }
.s3 { width: 101px; background: #375623; color: #fff; border: 1px solid #fff; border-right-width: 2px; border-left-width: 2px; }
.s4 { width: 136px; border-left: 1px solid #aaa; border-right: 1px solid #aaa; padding-right: 5px; letter-spacing: .02px; } .s5 { width: 137px; border-right: 1px solid #aaa; padding-right: 2px; letter-spacing: -.05px; } .s6 { width: 136px; border-right: 1px solid #aaa; letter-spacing: 0; }
.plus { width: 53px; padding: 4px 0 0 30px; background: #e9e9e9; height: 24px; }
.hd { margin: 7px 0 0 50px; }
.hscroll { display: flex; align-items: center; margin-left: 15px; height: 23px; }
.hscroll i { width: 261px; height: 8px; border-radius: 4px; background: #6b6b6b; margin: 0 22px 0 4px; }

.status { display: flex; height: 23px; align-items: center; background: #f4f4f4; font-size: 11px; color: #444; letter-spacing: -.15px; }
.listo { margin-left: 6px; width: 26px; }
.acc { margin-left: 17px; }
.acct { margin-left: 4px; width: 184px; letter-spacing: -.19px; }
.views { margin-left: 721px; display: flex; }
.views span { width: 39.500px; height: 23px; display: flex; align-items: center; justify-content: center; }
.views .von { background: #dcdcdc; }
.zoom { margin-left: 4px; }
.pc { margin-left: 12px; letter-spacing: -.5px; }

.taskbar { display: flex; height: 45px; align-items: center; background: #202020; color: #fff; font-size: 11px; }
.sun { margin-left: 18px; }
.weather { margin-left: 6px; width: 234px; display: flex; flex-direction: column; line-height: 15px; letter-spacing: -.15px; margin-top: -1px; }
.weather .g { color: #c8c8c8; }
.tsearch { margin-left: 13px; width: 114px; height: 31px; border-radius: 16px; background: #2d2d2d; display: flex; align-items: center; padding-left: 20px; gap: 4px; font-size: 12.500px; letter-spacing: -.3px; }
.apps { margin-left: 3px; display: grid; grid-template-columns: repeat(14, 41.270px); height: 45px; }
.apps span { position: relative; display: flex; align-items: center; justify-content: center; }
.apps .dot::after, .apps .open::after { content: ""; position: absolute; left: 50%; bottom: 5px; width: 6px; height: 3px; margin-left: -3px; border-radius: 2px; background: #8c8c8c; }
.apps .open { margin: 4px 2px; background: #2c2c2c; border-radius: 4px; }
.apps .open::after { width: 15px; margin-left: -8px; bottom: 1px; background: #3fd83a; }
.apps em { position: absolute; right: 5px; top: 7px; width: 15px; height: 15px; border-radius: 50%; background: #3fd83a; color: #123; font: 11px/15px "Open Sans", sans-serif; text-align: center; }
.tray { margin-left: 47px; }
.clock { margin-left: 10px; width: 64px; display: flex; flex-direction: column; align-items: flex-end; line-height: 15px; letter-spacing: -.12px; margin-top: -1px; }
.notif { margin-left: 6px; width: 16px; height: 16px; border-radius: 50%; background: #3fd83a; color: #123; font-size: 9px; line-height: 16px; text-align: center; }
```
